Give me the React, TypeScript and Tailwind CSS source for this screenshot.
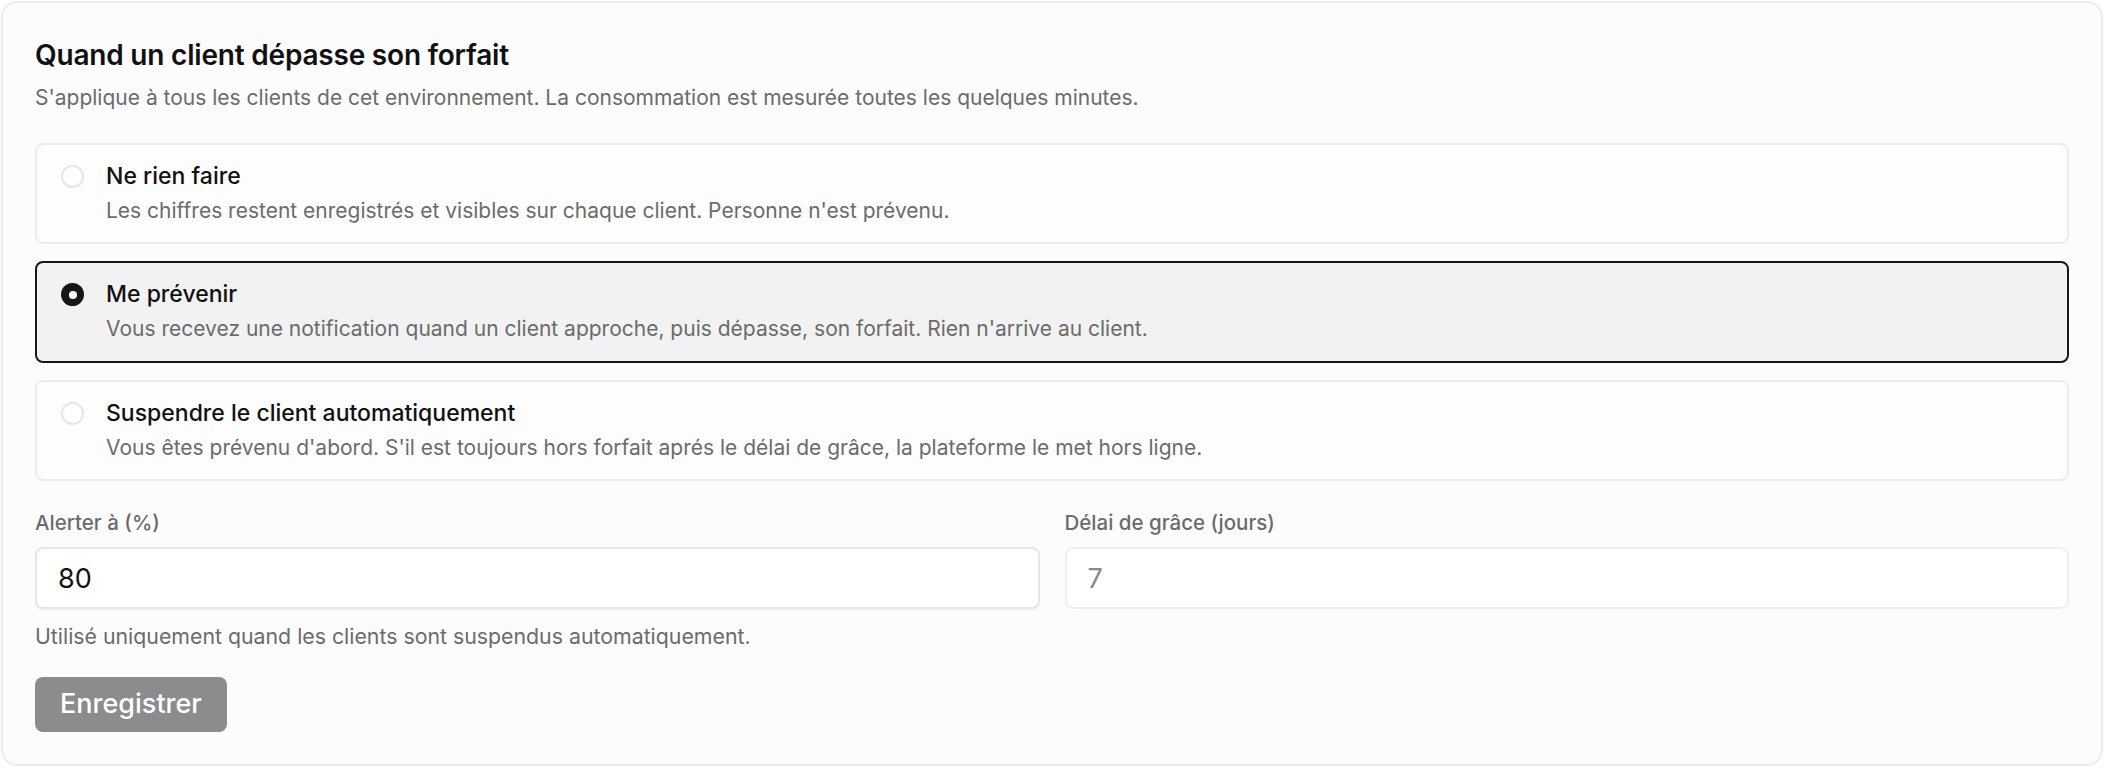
import { useState } from "react";

type Option = { id: string; title: string; desc: string };

const options: Option[] = [
  {
    id: "none",
    title: "Ne rien faire",
    desc: "Les chiffres restent enregistrés et visibles sur chaque client. Personne n'est prévenu.",
  },
  {
    id: "notify",
    title: "Me prévenir",
    desc: "Vous recevez une notification quand un client approche, puis dépasse, son forfait. Rien n'arrive au client.",
  },
  {
    id: "suspend",
    title: "Suspendre le client automatiquement",
    desc: "Vous êtes prévenu d'abord. S'il est toujours hors forfait aprés le délai de grâce, la plateforme le met hors ligne.",
  },
];

function Radio({ checked }: { checked: boolean }) {
  if (checked) {
    return (
      <span className="mt-[4px] flex h-[23px] w-[23px] shrink-0 items-center justify-center rounded-full bg-[#171717]">
        <span className="h-[8px] w-[8px] rounded-full bg-white" />
      </span>
    );
  }
  return <span className="mt-[4px] h-[23px] w-[23px] shrink-0 rounded-full border-2 border-[#e6e6e6] bg-white" />;
}

export default function App() {
  const [selected, setSelected] = useState("notify");
  const [alert, setAlert] = useState("80");

  return (
    <div className="min-h-screen bg-white font-['Inter',sans-serif]">
      <div className="mx-[1px] mt-[1px] rounded-[16px] border-2 border-[#ececec] bg-[#fcfcfc] px-[32px] pb-[32px] pt-[35px]">
        <h2 className="text-[28px] font-semibold leading-[34px] tracking-[-0.2px] text-[#111111]">
          Quand un client dépasse son forfait
        </h2>
        <p className="mt-[12px] text-[21px] leading-[28px] text-[#6b6b6b]">
          S'applique à tous les clients de cet environnement. La consommation est mesurée toutes les quelques minutes.
        </p>

        <div className="mt-[31px] flex flex-col gap-[17px]">
          {options.map((o) => {
            const active = selected === o.id;
            return (
              <button
                key={o.id}
                onClick={() => setSelected(o.id)}
                className={
                  active
                    ? "flex items-start gap-[22px] rounded-[8px] border-2 border-[#171717] bg-[#f2f2f2] pb-[18px] pl-[24px] pr-[24px] pt-[16px] text-left"
                    : "flex items-start gap-[22px] rounded-[8px] border-2 border-[#ececec] bg-[#fdfdfd] pb-[17px] pl-[24px] pr-[24px] pt-[16px] text-left"
                }
              >
                <Radio checked={active} />
                <div className="flex flex-col">
                  <span className="text-[23px] font-medium leading-[30px] text-[#111111]">{o.title}</span>
                  <span className="mt-[6px] text-[21px] leading-[28px] text-[#6b6b6b]">{o.desc}</span>
                </div>
              </button>
            );
          })}
        </div>

        <div className="mt-[28px] grid grid-cols-2 gap-[25px]">
          <label className="flex flex-col">
            <span className="text-[20.5px] font-medium leading-[28px] text-[#6b6b6b]">Alerter à (%)</span>
            <input
              value={alert}
              onChange={(e) => setAlert(e.target.value)}
              className="mt-[10px] h-[62px] rounded-[8px] border-2 border-[#e6e6e6] bg-white px-[21px] text-[27px] text-[#111111] shadow-[0_1px_2px_rgba(0,0,0,0.06)] outline-none"
            />
          </label>
          <label className="flex flex-col">
            <span className="text-[20.5px] font-medium leading-[28px] text-[#6b6b6b]">Délai de grâce (jours)</span>
            <input
              value="7"
              disabled
              readOnly
              className="mt-[10px] h-[62px] rounded-[8px] border-2 border-[#efefef] bg-white px-[21px] text-[27px] text-[#8a8a8a] outline-none"
            />
          </label>
        </div>

        <p className="mt-[13px] text-[21.3px] leading-[28px] text-[#6b6b6b]">
          Utilisé uniquement quand les clients sont suspendus automatiquement.
        </p>

        <button className="mt-[27px] h-[55px] rounded-[8px] bg-[#8c8c8c] px-[25px] text-[27px] font-medium text-white">
          Enregistrer
        </button>
      </div>
    </div>
  );
}
